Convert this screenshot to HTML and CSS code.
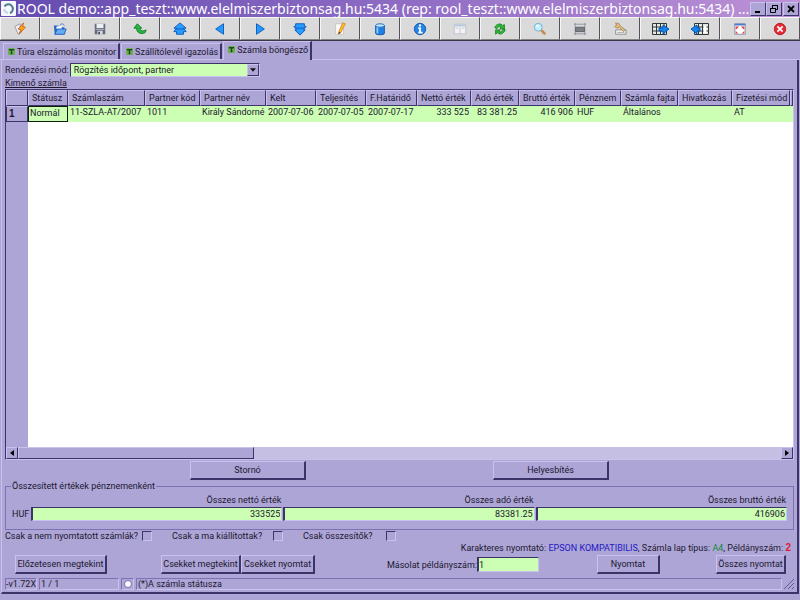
FILE: index.html
```html
<!DOCTYPE html>
<html lang="hu">
<head>
<meta charset="utf-8">
<title>ROOL demo</title>
<link rel="stylesheet" href="styles.css">
</head>
<body>
<div class="window">
<header class="titlebar">
  <svg class="logo" viewBox="0 0 15 15"><rect width="15" height="15" rx="1" fill="#f4f8fb"/><path d="M3.500 5.500A4.500 4.500 0 1 1 9 12" fill="none" stroke="#55778f" stroke-width="2"/><path d="M3 8a5 5 0 0 0 4 4" fill="none" stroke="#c9d8e2" stroke-width="2"/></svg>
  <h1>ROOL demo::app_teszt::www.elelmiszerbiztonsag.hu:5434 (rep: rool_teszt::www.elelmiszerbiztonsag.hu:5434) ...</h1>
  <div class="winbtns">
    <button aria-label="Kis méret"><svg viewBox="0 0 10 10"><path d="M2 8h5" stroke="#000" stroke-width="2"/></svg></button>
    <button aria-label="Előző méret"><svg viewBox="0 0 10 10"><path d="M3.500 4V1.500h5v4H7M3 1.500h6M1.500 4.500h5v4h-5zM1 4.500h6" fill="none" stroke="#000"/></svg></button>
    <button class="close" aria-label="Bezárás"><svg viewBox="0 0 10 10"><path d="M2 2l6 6M8 2l-6 6" stroke="#000" stroke-width="1.800"/></svg></button>
  </div>
</header>
<nav class="toolbar">
  <button aria-label="Végrehajt"><svg viewBox="0 0 16 16"><path d="M2 5l6-3 1 9-3 3z" fill="#eceef6" stroke="#9296aa"/><path d="M12 1L6 8l3 1-2 5 7-8-3-1z" fill="#ffa51e" stroke="#c45d08"/></svg></button>
  <button aria-label="Megnyitás"><svg viewBox="0 0 16 16"><path d="M1 4h5l1 2h6v8H2z" fill="#2568c8"/><path d="M4 5h6v3H4z" fill="#fff"/><path d="M5 8h10l-2 6H2z" fill="#65aef4" stroke="#1c59bb"/><path d="M8 4c1-3 4-2 5 0" fill="none" stroke="#3476ce"/></svg></button>
  <button aria-label="Mentés"><svg viewBox="0 0 16 16"><path d="M2 2h12v12H2z" fill="#656b7c"/><path d="M4 2h8v5H4z" fill="#eceef4"/><path d="M3 8h10v1H3z" fill="#aeb4c2"/><path d="M5 10h6v4H5z" fill="#d5d8e1"/><path d="M6 11h2v3H6z" fill="#444b5c"/></svg></button>
  <button aria-label="Visszavonás"><svg viewBox="0 0 16 16"><path d="M5 2L1 7h3c0 5 5 8 10 5l1-3c-4 2-7 1-7-2h2z" fill="#27b443" stroke="#137928"/></svg></button>
  <button aria-label="Első"><svg viewBox="0 0 16 16"><path d="M8 1l7 6h-3l3 4h-3v3H4v-3H1l3-4H1z" fill="#299cff" stroke="#0755b7"/><path d="M3 8h10" stroke="#0755b7"/></svg></button>
  <button aria-label="Előző"><svg viewBox="0 0 16 16"><path d="M12 2v12L3 8z" fill="#249aff" stroke="#0755b7"/></svg></button>
  <button aria-label="Következő"><svg viewBox="0 0 16 16"><path d="M4 2v12l9-6z" fill="#249aff" stroke="#0755b7"/></svg></button>
  <button aria-label="Utolsó"><svg viewBox="0 0 16 16"><path d="M8 15L2 9h2L1 5h2V2h10v3h2l-3 4h2z" fill="#299cff" stroke="#0755b7"/><path d="M3 7h10" stroke="#0755b7"/></svg></button>
  <button aria-label="Szerkesztés"><svg viewBox="0 0 16 16"><path d="M3 2h9v12H3z" fill="#fafafa" stroke="#c3c3cb"/><path d="M11 1l3 1-5 10-3 2 1-4z" fill="#ffbd28" stroke="#d9862a"/><path d="M6 14l1-3 2 1z" fill="#58412f"/></svg></button>
  <button aria-label="Adatbázis"><svg viewBox="0 0 16 16"><path d="M3 4v9c0 2 10 2 10 0V4z" fill="#217fe0" stroke="#0b52aa"/><path d="M5 5v8" stroke="#8dceff" stroke-width="2"/><ellipse cx="8" cy="4" rx="5" ry="2" fill="#c5e6ff" stroke="#1c69c1"/></svg></button>
  <button aria-label="Információ"><svg viewBox="0 0 16 16"><circle cx="8" cy="8" r="6.500" fill="#2686e8" stroke="#0b50a9"/><path d="M6 7h2v5M6 12h5" fill="none" stroke="#fff" stroke-width="2"/><circle cx="8" cy="4" r="1.300" fill="#fff"/></svg></button>
  <button aria-label="Űrlap"><svg viewBox="0 0 16 16"><path d="M1.500 2.500h13v11h-13z" fill="#f3f3f5" stroke="#bfc1ca"/><path d="M2 3h12v2H2z" fill="#b5c8e0"/><path d="M8 5v8M3 7h3M10 7h3" stroke="#c2c3ca"/></svg></button>
  <button aria-label="Frissítés"><svg viewBox="0 0 16 16"><path d="M2 6c2-4 7-5 9-2l2-1v5H8l1-2C7 5 6 5 4 8z" fill="#31b83b" stroke="#168020"/><path d="M14 9c-2 5-7 6-9 3l-2 2V9h5l-1 2c2 1 3 0 5-3z" fill="#31b83b" stroke="#168020"/></svg></button>
  <button aria-label="Keresés"><svg viewBox="0 0 16 16"><path d="M9 9l5 5" stroke="#c98a50" stroke-width="3"/><circle cx="6" cy="6" r="4.500" fill="#c3f0ff" stroke="#69a9cf"/><path d="M4 5l2-1" stroke="#fff" stroke-width="2"/></svg></button>
  <button aria-label="Sor"><svg viewBox="0 0 16 16"><path d="M2.500 1v14M13.500 1v14M1 2.500h14M1 13.500h14" stroke="#8c90a0"/><path d="M3 6h10v5H3z" fill="#7d7e86" stroke="#555964"/></svg></button>
  <button aria-label="Beállítás"><svg viewBox="0 0 16 16"><path d="M3 9h12v5H3z" fill="#f2efe9" stroke="#8b8a8e"/><path d="M5 12h8" stroke="#aaa8a8"/><path d="M3 1l1 3-2 1 2 2 3-1 5 5 2-2-6-5-1-2z" fill="#e3bd79" stroke="#a5865b"/></svg></button>
  <button class="wide" aria-label="Exportálás"><svg viewBox="0 0 18 16"><path d="M1.500 2.500h14v11h-14zM1 6h14M1 10h14M5.500 2v12M9.500 2v12M13 2v12" fill="#e5ebe1" stroke="#30373a"/><path d="M8 7h4V4l6 4-6 5v-3H8z" fill="#1387ed" stroke="#0755b7"/></svg></button>
  <button class="wide" aria-label="Importálás"><svg viewBox="0 0 18 16"><path d="M3.500 2.500h14v11h-14zM3 6h14M3 10h14M7.500 2v12M11.500 2v12" fill="#e5ebe1" stroke="#30373a"/><path d="M12.500 5h3v7h-3z" fill="#fff"/><path d="M9 7H6V4L0 8l6 5v-3h3z" fill="#1387ed" stroke="#0755b7"/></svg></button>
  <button aria-label="Teljes képernyő"><svg viewBox="0 0 16 16"><path d="M2 2h12v12H2z" fill="#fff" stroke="#8389ad"/><path d="M2 2h12v2H2z" fill="#4d7bd0"/><path d="M3 5h4L3 9zM13 5v4L9 5zM3 13v-3l3 3zM13 13h-3l3-3z" fill="#e5413e"/></svg></button>
  <button aria-label="Kilépés"><svg viewBox="0 0 16 16"><circle cx="8" cy="8" r="6.500" fill="#eb2932" stroke="#ac1720"/><path d="M5 5l6 6M11 5l-6 6" stroke="#fff" stroke-width="2"/></svg></button>
</nav>
<div class="tabs" role="tablist">
  <button role="tab" class="tab"><svg viewBox="0 0 8 8"><rect width="8" height="8" rx="1" fill="#6fae4f"/><path d="M1 2h6M4 2v5M3 6h2" stroke="#194b20" stroke-width="1.500"/></svg>Túra elszámolás monitor</button>
  <button role="tab" class="tab"><svg viewBox="0 0 8 8"><rect width="8" height="8" rx="1" fill="#6fae4f"/><path d="M1 2h6M4 2v5M3 6h2" stroke="#194b20" stroke-width="1.500"/></svg>Szállítólevél igazolás</button>
  <button role="tab" class="tab active" aria-selected="true"><svg viewBox="0 0 8 8"><rect width="8" height="8" rx="1" fill="#6fae4f"/><path d="M1 2h6M4 2v5M3 6h2" stroke="#194b20" stroke-width="1.500"/></svg>Számla böngésző</button>
</div>
<main class="page">
  <div class="sort">
    <label for="sort">Rendezési mód:</label>
    <div class="combo"><select id="sort"><option>Rögzítés időpont, partner</option></select><span class="drop"><svg viewBox="0 0 7 4"><path d="M0 0h7L3.500 4z" fill="#111"/></svg></span></div>
  </div>
  <h2>Kimenő számla</h2>
  <section class="grid">
    <div class="sheet">
    <table>
      <colgroup><col class="c-row"><col class="c-status"><col class="c-number"><col class="c-code"><col class="c-name"><col class="c-date"><col class="c-date"><col class="c-due"><col class="c-net"><col class="c-tax"><col class="c-gross"><col class="c-cur"><col class="c-kind"><col class="c-net"><col class="c-pay"><col></colgroup>
      <thead><tr><th></th><th>Státusz</th><th>Számlaszám</th><th>Partner kód</th><th>Partner név</th><th>Kelt</th><th>Teljesítés</th><th>F.Határidő</th><th>Nettó érték</th><th>Adó érték</th><th>Bruttó érték</th><th>Pénznem</th><th>Számla fajta</th><th>Hivatkozás</th><th>Fizetési mód</th><th></th></tr></thead>
      <tbody><tr><th scope="row">1</th><td class="current">Normál</td><td>11-SZLA-AT/2007</td><td>1011</td><td>Király Sándorné</td><td>2007-07-06</td><td>2007-07-05</td><td>2007-07-17</td><td class="num">333 525</td><td class="num">83 381.25</td><td class="num">416 906</td><td>HUF</td><td>Általános</td><td></td><td>AT</td><td></td></tr></tbody>
    </table>
    </div>
    <div class="scroll">
      <button aria-label="Balra"><svg viewBox="0 0 4 6"><path d="M4 0v6L0 3z"/></svg></button>
      <div class="thumb"></div>
      <button class="right" aria-label="Jobbra"><svg viewBox="0 0 4 6"><path d="M0 0v6l4-3z"/></svg></button>
    </div>
  </section>
  <div class="actions"><button class="btn">Stornó</button><button class="btn">Helyesbítés</button></div>
  <fieldset>
    <legend>Összesített értékek pénznemenként</legend>
    <div class="sums">
      <span class="cur">HUF</span>
      <div class="sum"><label for="netto">Összes nettó érték</label><input id="netto" value="333525"></div>
      <div class="sum"><label for="ado">Összes adó érték</label><input id="ado" value="83381.25"></div>
      <div class="sum"><label for="brutto">Összes bruttó érték</label><input id="brutto" value="416906"></div>
    </div>
  </fieldset>
  <div class="checks">
    <label>Csak a nem nyomtatott számlák?<input type="checkbox"></label>
    <label>Csak a ma kiállítottak?<input type="checkbox"></label>
    <label>Csak összesítők?<input type="checkbox"></label>
  </div>
  <p class="printer">Karakteres nyomtató: <span class="blue">EPSON KOMPATIBILIS</span>, Számla lap típus: <span class="green">A4</span>, Példányszám: <b>2</b></p>
  <div class="prints">
    <button class="btn preview">Előzetesen megtekint</button>
    <button class="btn view">Csekket megtekint</button>
    <button class="btn check">Csekket nyomtat</button>
    <label for="copies">Másolat példányszám:</label><input id="copies" value="1">
    <button class="btn print">Nyomtat</button>
    <button class="btn all">Összes nyomtat</button>
  </div>
  <footer class="status">
    <span class="cell ver">-v1.72X</span><span class="cell pos">1 / 1</span><span class="cell dot"><i></i></span><span class="cell msg">(*)A számla státusza</span>
    <svg class="grip" viewBox="0 0 10 10"><path d="M0 10L10 0M4 10l6-6M8 10l2-2" stroke="#615997"/></svg>
  </footer>
</main>
</div>
</body>
</html>
```
FILE: styles.css
```css
* { box-sizing: border-box; }
body {
  --bg: #ada5d6;
  --light: #c9c2ec;
  --dark: #3c3468;
  --mid: #7c72b4;
  --green: #ccffb3;
  margin: 0;
  background: var(--bg);
  color: #1c1830;
  font: 9px/12px Roboto, "Liberation Sans", sans-serif;
}
button, input, select { font: inherit; color: inherit; margin: 0; padding: 0; border-radius: 0; }
h1, h2, p { margin: 0; font-size: 9px; font-weight: normal; }
svg { display: block; }
.window { min-height: 100vh; display: flex; flex-direction: column; padding-bottom: 4px; }

.titlebar {
  height: 17px;
  display: flex;
  align-items: center;
  padding: 0 1px;
  background: linear-gradient(90deg, #634bb0, #8e6cc4 50%, #bd92d6);
}
.logo { width: 15px; height: 15px; flex: none; }
.titlebar h1 { flex: 1; min-width: 0; padding-left: 1px; color: #fff; font: 14px/17px "Noto Sans", sans-serif; white-space: nowrap; }
.winbtns { display: flex; }
.winbtns button { width: 16px; height: 14px; display: grid; place-items: center; background: var(--bg); border: 1px solid; border-color: var(--light) var(--dark) var(--dark) var(--light); }
.winbtns .close { margin-left: 1px; }
.winbtns svg { width: 10px; height: 10px; }

.toolbar { display: grid; grid-template-columns: repeat(20, 1fr); height: 24px; border-bottom: 1px solid #3b3748; }
.toolbar button { display: grid; place-items: center; background: #dadada; border: 1px solid; border-color: #f6f6f6 #55525e #858585 #f6f6f6; }
.toolbar svg { width: 14px; height: 14px; }
.toolbar .wide svg { width: 18px; height: 16px; }

.tabs { display: flex; align-items: flex-end; gap: 1px; height: 19px; padding-left: 3px; border-bottom: 1px solid var(--light); }
.tab { display: flex; align-items: center; gap: 2px; height: 16px; padding: 0 2px 0 4px; background: none; border: 0; border-top: 1px solid var(--light); border-left: 1px solid var(--light); border-right: 2px solid var(--dark); white-space: nowrap; }
.tab svg { width: 7px; height: 7px; }
.tab.active { height: 19px; margin-bottom: -1px; padding-bottom: 3px; background: var(--bg); }

.page { flex: 1; display: flex; flex-direction: column; margin: 0 1px 2px; padding: 3px 3px 2px; border-left: 1px solid var(--light); border-right: 2px solid var(--dark); border-bottom: 2px solid var(--dark); }
.sort { display: flex; align-items: center; gap: 1px; height: 14px; }
.combo { display: flex; width: 190px; height: 14px; background: var(--green); border: 1px solid; border-color: var(--dark) var(--light) var(--light) var(--dark); }
.combo select { flex: 1; min-width: 0; padding-left: 3px; border: 0; background: none; appearance: none; }
.drop { width: 12px; display: grid; place-items: center; background: var(--bg); border: 1px solid; border-color: var(--light) var(--dark) var(--dark) var(--light); pointer-events: none; }
.drop svg { width: 6px; height: 4px; }
h2 { text-decoration: underline; }

.grid { flex: 1; display: flex; flex-direction: column; border: 1px solid; border-color: var(--dark) var(--light) var(--light) var(--dark); }
.sheet { flex: 1; overflow: hidden; background: linear-gradient(90deg, var(--bg) 22px, #fff 22px); }
table { width: 100%; table-layout: fixed; border-collapse: separate; border-spacing: 0; }
th, td { padding: 0 3px; white-space: nowrap; text-align: left; font-weight: normal; }
thead th { padding: 0 0 0 3px; height: 16px; background: var(--bg); border: 1px solid; border-color: var(--light) var(--dark) var(--dark) var(--light); }
tbody td { height: 16px; padding: 0 2px 4px; line-height: 12px; background: var(--green); }
tbody th { padding-left: 2px; font: bold 10px/12px "Liberation Sans", sans-serif; background: var(--bg); border: 1px solid; border-color: var(--light) var(--dark) var(--dark) var(--dark); }
tbody .current { padding: 0 0 2px 1px; border: 1px solid #10200c; }
tbody .num { text-align: right; }
.c-row { width: 22px; }
.c-status { width: 40px; }
.c-number { width: 77px; }
.c-code { width: 55px; }
.c-name { width: 66px; }
.c-date { width: 50px; }
.c-due { width: 51px; }
.c-net { width: 54px; }
.c-tax { width: 48px; }
.c-gross { width: 56px; }
.c-cur { width: 46px; }
.c-kind { width: 57px; }
.c-pay { width: 58px; }

.scroll { display: flex; height: 12px; background: #c5bfe3; }
.scroll button, .thumb { background: var(--bg); border: 1px solid; border-color: var(--light) var(--dark) var(--dark) var(--light); }
.scroll button { width: 12px; display: grid; place-items: center; }
.scroll svg { width: 4px; height: 6px; }
.thumb { width: 30%; }
.scroll .right { margin-left: auto; }

.btn { height: 19px; background: var(--bg); border: 1px solid var(--light); border-right: 2px solid var(--dark); border-bottom: 2px solid var(--dark); white-space: nowrap; }
.actions { display: flex; justify-content: center; gap: 187px; padding-top: 1px; }
.actions .btn { width: 116px; }

fieldset { margin: 0; padding: 0 6px 8px; min-width: 0; border: 1px solid var(--mid); }
legend { padding: 0 1px; margin-left: -1px; }
.sums { display: flex; align-items: flex-end; gap: 1px; padding-top: 2px; }
.cur { width: 18px; line-height: 14px; }
.sum { flex: 1; display: flex; flex-direction: column; text-align: right; }
input { background: var(--green); border: 1px solid; border-color: var(--dark) var(--light) var(--light) var(--dark); border-left-width: 2px; height: 14px; min-width: 0; }
.sum input { width: 100%; text-align: right; padding-right: 1px; }
.sum label { padding-right: 1px; line-height: 13px; }

.checks { display: grid; grid-template-columns: 147px 111px 93px; gap: 20px; height: 12px; }
.checks label { display: flex; align-items: center; justify-content: space-between; }
.checks input { appearance: none; width: 10px; height: 10px; background: var(--bg); border-width: 1px; }
.printer { text-align: right; padding-right: 3px; }
.blue { color: #1e18c4; }
.green { color: #14893c; }
.printer b { color: #dd1c38; font: bold 10px/12px "Liberation Sans", sans-serif; }
.prints { display: flex; align-items: center; margin-top: 1px; padding: 0 8px 0 10px; }
.prints .btn { flex: none; }
.preview { width: 92px; margin-right: 54px; }
.view { width: 80px; }
.check { width: 74px; }
.prints label { margin-left: auto; }
#copies { width: 62px; height: 15px; }
.print { width: 63px; margin-left: 58px; }
.all { width: 70px; margin-left: 56px; }

.status { display: flex; gap: 2px; margin-top: 4px; }
.cell { height: 12px; line-height: 11px; border: 1px solid; border-color: var(--mid) var(--light) var(--light) var(--mid); white-space: nowrap; }
.ver { width: 32px; }
.pos { width: 80px; padding-left: 1px; }
.dot { width: 13px; display: grid; place-items: center; }
.dot i { width: 8px; height: 8px; border-radius: 50%; background: #fff; border: 1px solid var(--mid); }
.msg { flex: 1; padding-left: 1px; }
.grip { width: 10px; height: 12px; }
```
